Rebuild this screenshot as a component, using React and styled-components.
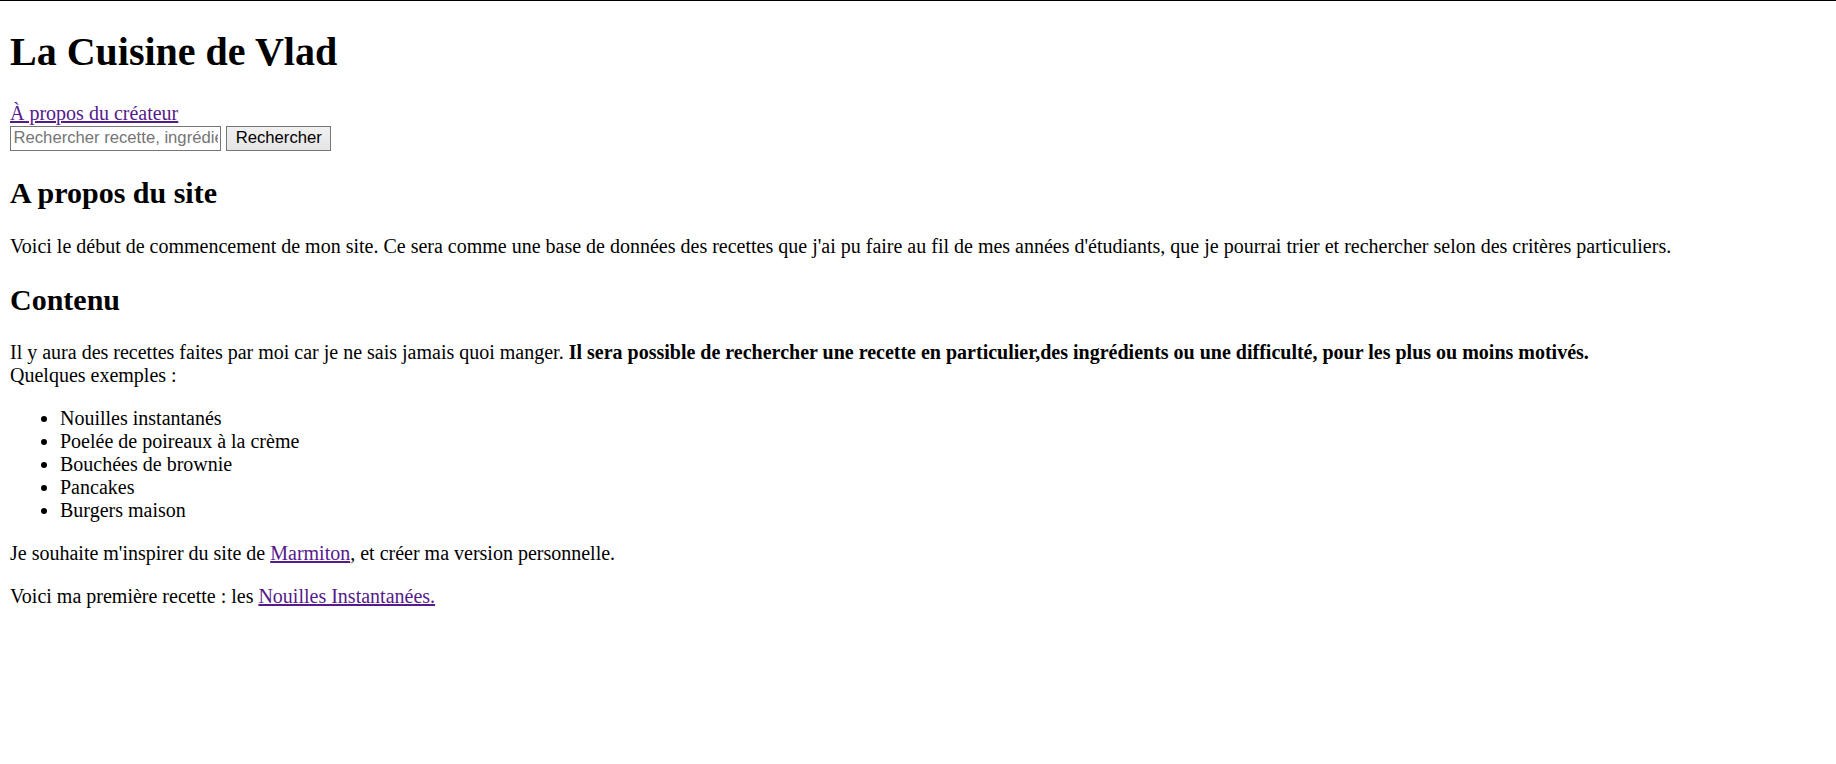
import styled, { createGlobalStyle } from "styled-components";

const GlobalStyle = createGlobalStyle`
  html, body {
    margin: 0;
    background: #ffffff;
  }
  body {
    border-top: 1px solid #000000;
    font-family: "Liberation Serif", "Times New Roman", serif;
    font-size: 16px;
    color: #000000;
  }
`;

// the screenshot was taken at 125% browser zoom
const Page = styled.div`
  zoom: 1.25;
  margin: 8px;
`;

const Title = styled.h1`
  font-size: 2em;
  font-weight: bold;
  margin: 0.67em 0;
`;

const Section = styled.h2`
  font-size: 1.5em;
  font-weight: bold;
  margin: 0.83em 0;
`;

const Para = styled.p`
  margin: 1em 0;
  line-height: normal;
`;

const Link = styled.a`
  color: #551a8b;
  text-decoration: underline;
  cursor: pointer;
`;

const SearchForm = styled.form`
  display: flex;
  align-items: flex-start;
  gap: 4px;
  margin: 0;
  padding-top: 1px;
  height: 20px;
`;

const SearchInput = styled.input`
  box-sizing: border-box;
  width: 169px;
  height: 20px;
  font-family: "Liberation Sans", Arial, sans-serif;
  font-size: 13.333px;
  padding: 1px 2px;
  border: 1px solid #767676;
  border-radius: 0;
  color: #000;
  background: #fff;
  &::placeholder {
    color: #757575;
  }
`;

const SearchButton = styled.button`
  box-sizing: border-box;
  width: 84px;
  height: 20px;
  font-family: "Liberation Sans", Arial, sans-serif;
  font-size: 13.333px;
  padding: 1px 6px;
  border: 1px solid #767676;
  border-radius: 0;
  background: linear-gradient(#f0f0f0, #e5e5e5);
  color: #000;
`;

const List = styled.ul`
  margin: 1em 0;
  padding-left: 40px;
  list-style: disc;
`;

const recettes = [
  "Nouilles instantanés",
  "Poelée de poireaux à la crème",
  "Bouchées de brownie",
  "Pancakes",
  "Burgers maison",
];

export default function App() {
  return (
    <>
      <GlobalStyle />
      <Page>
        <Title>La Cuisine de Vlad</Title>
        <Link href="#createur">À propos du créateur</Link>
        <SearchForm onSubmit={(e) => e.preventDefault()}>
          <SearchInput type="text" placeholder="Rechercher recette, ingrédients..." />
          <SearchButton type="submit">Rechercher</SearchButton>
        </SearchForm>

        <Section>A propos du site</Section>
        <Para>
          Voici le début de commencement de mon site. Ce sera comme une base de données des recettes que j'ai pu faire
          au fil de mes années d'étudiants, que je pourrai trier et rechercher selon des critères particuliers.
        </Para>

        <Section>Contenu</Section>
        <Para>
          Il y aura des recettes faites par moi car je ne sais jamais quoi manger.{" "}
          <b>
            Il sera possible de rechercher une recette en particulier,des ingrédients ou une difficulté, pour les plus ou
            moins motivés.
          </b>
          <br />
          Quelques exemples :
        </Para>
        <List>
          {recettes.map((r) => (
            <li key={r}>{r}</li>
          ))}
        </List>
        <Para>
          Je souhaite m'inspirer du site de <Link href="#marmiton">Marmiton</Link>, et créer ma version personnelle.
        </Para>
        <Para>
          Voici ma première recette : les <Link href="#nouilles">Nouilles Instantanées.</Link>
        </Para>
      </Page>
    </>
  );
}
